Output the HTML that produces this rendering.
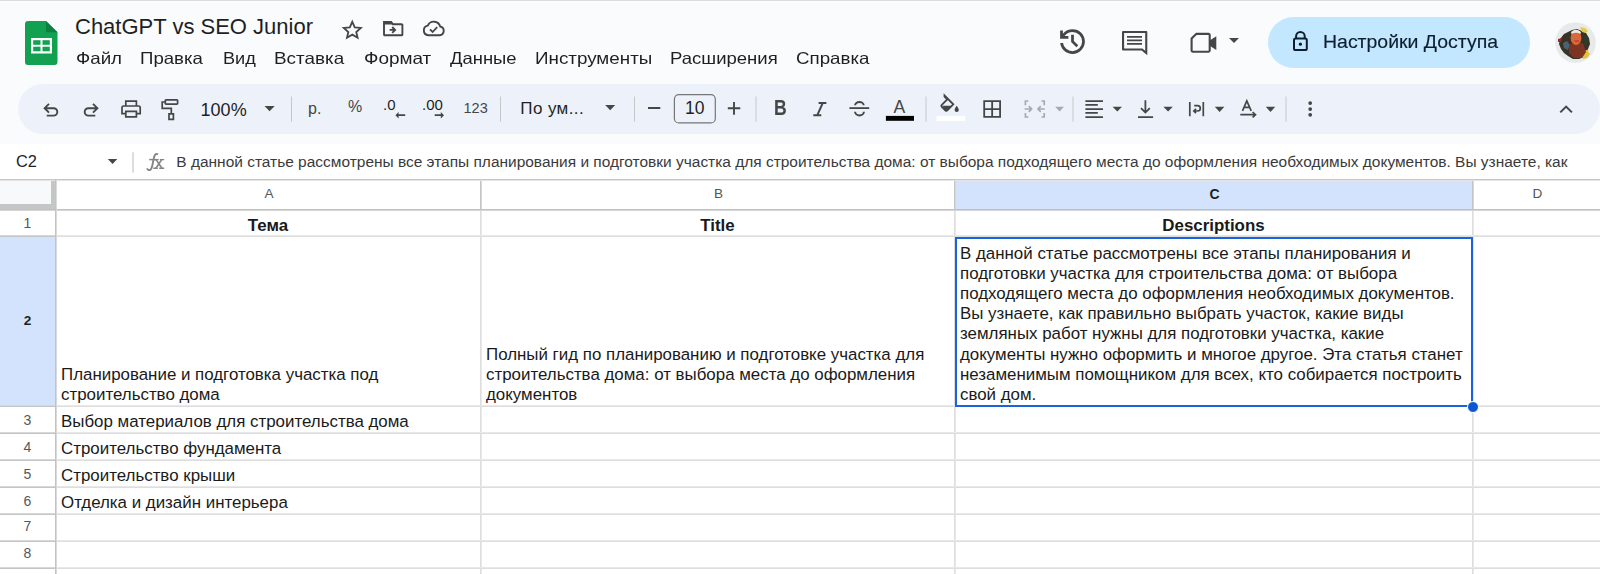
<!DOCTYPE html>
<html><head><meta charset="utf-8">
<style>
*{box-sizing:border-box;margin:0;padding:0}
html,body{width:1600px;height:574px;overflow:hidden;background:#fff;font-family:"Liberation Sans",sans-serif;color:#1f1f1f}
.a{position:absolute}
.hdr{left:0;top:0;width:1600px;height:144.4px;background:#f9fbfd}
.tb{left:18px;top:83.7px;width:1582px;height:50.4px;border-radius:25.2px;background:#edf2fa}
.menu{top:48px;transform-origin:0 0;font-size:16.5px;line-height:20px;white-space:nowrap;color:#1f1f1f}
.ico{position:absolute}
.sep{position:absolute;width:1px;height:24px;top:97px;background:#c7c7c7}
.cell{position:absolute;font-size:16.9px;line-height:20.17px;color:#1a1a1a;white-space:nowrap}
.hl{position:absolute;height:1px;background:#e1e1e1;left:0;width:1600px}
.vl{position:absolute;width:1px;background:#e1e1e1;top:179px;height:395px}
.rn{position:absolute;left:0;width:55px;text-align:center;font-size:13px;color:#444746}
.cn{position:absolute;top:179px;height:30px;line-height:30px;text-align:center;font-size:13px;color:#444746}
</style></head><body>
<div class="a hdr"></div>
<div class="a" style="left:0;top:0;width:1600px;height:1px;background:#dadbdd"></div><div class="a" style="left:0;top:1px;width:1600px;height:1px;background:#fdfeff"></div>
<!-- logo -->
<svg class="ico" style="left:25px;top:21px" width="33" height="44" viewBox="0 0 33 44">
<path d="M3 0H21L32.5 11.3V41a3 3 0 0 1-3 3H3a3 3 0 0 1-3-3V3a3 3 0 0 1 3-3z" fill="#12a150"/>
<path d="M21 0L32.5 11.3H21z" fill="#0b8043"/>
<rect x="6" y="17" width="21" height="15.5" fill="#fff"/>
<rect x="8.2" y="19.2" width="7.3" height="4.6" fill="#12a150"/>
<rect x="17.5" y="19.2" width="7.3" height="4.6" fill="#12a150"/>
<rect x="8.2" y="25.7" width="7.3" height="4.6" fill="#12a150"/>
<rect x="17.5" y="25.7" width="7.3" height="4.6" fill="#12a150"/>
</svg>
<div class="a" style="left:75px;top:12.8px;font-size:22px;line-height:28px;white-space:nowrap;color:#1f1f1f">ChatGPT vs SEO Junior</div>
<!-- star / folder / cloud -->
<svg class="ico" style="left:0;top:0" width="370" height="45" viewBox="0 0 370 45"><path d="M352.3 21.8L354.8 27.4L360.8 27.95L356.25 31.95L357.6 37.7L352.3 34.65L347 37.7L348.35 31.95L343.8 27.95L349.8 27.4Z" fill="none" stroke="#444746" stroke-width="1.8" stroke-linejoin="miter" stroke-miterlimit="3"/></svg>
<svg class="ico" style="left:0;top:0" width="460" height="45" viewBox="0 0 460 45"><path d="M384 22H391L393 24.2H401.5A0.9 0.9 0 0 1 402.4 25.1V34.4A0.9 0.9 0 0 1 401.5 35.3H384.9A0.9 0.9 0 0 1 384 34.4Z" fill="none" stroke="#444746" stroke-width="1.9"/><path d="M384 21.2H391.3L393.6 24.4H384Z" fill="#444746"/><path d="M389.6 29.9H394.6M392.2 27L395.1 29.9L392.2 32.8" fill="none" stroke="#444746" stroke-width="1.9"/><path d="M428.3 35.2H439.6A4.4 4.4 0 0 0 440.2 26.5A6.6 6.6 0 0 0 427.8 25.6A4.85 4.85 0 0 0 428.3 35.2Z" fill="none" stroke="#444746" stroke-width="1.9" stroke-linejoin="round"/><path d="M430 29.4L432.6 32L437.2 27.2" fill="none" stroke="#444746" stroke-width="1.8"/></svg>


<div class="a menu" style="left:76.2px;transform:scaleX(1.134)">Файл</div>
<div class="a menu" style="left:140.4px;transform:scaleX(1.128)">Правка</div>
<div class="a menu" style="left:222.5px;transform:scaleX(1.100)">Вид</div>
<div class="a menu" style="left:274.4px;transform:scaleX(1.144)">Вставка</div>
<div class="a menu" style="left:363.6px;transform:scaleX(1.148)">Формат</div>
<div class="a menu" style="left:450.0px;transform:scaleX(1.116)">Данные</div>
<div class="a menu" style="left:534.9px;transform:scaleX(1.140)">Инструменты</div>
<div class="a menu" style="left:670.1px;transform:scaleX(1.122)">Расширения</div>
<div class="a menu" style="left:795.7px;transform:scaleX(1.135)">Справка</div>

<!-- right header icons -->
<svg class="ico" style="left:1056px;top:25.4px" width="33" height="33" viewBox="0 -960 960 960"><path d="M480-120q-138 0-240.5-91.5T122-440h82q14 104 92.5 172T480-200q117 0 198.5-81.5T760-480q0-117-81.5-198.5T480-760q-69 0-129 32t-101 88h110v80H120v-240h80v94q51-64 124.5-99T480-840q75 0 140.5 28.5t114 77q48.5 48.5 77 114T840-480q0 75-28.5 140.5t-77 114q-48.5 48.5-114 77T480-120Zm112-192L440-464v-216h80v184l128 128-56 56Z" fill="#444746"/></svg>
<svg class="ico" style="left:0;top:0" width="1250" height="60" viewBox="0 0 1250 60"><path d="M1122 32A1 1 0 0 1 1123 31H1146.3A1 1 0 0 1 1147.3 32V55.2L1141.6 50.6H1123A1 1 0 0 1 1122 49.6ZM1124.1 33.1V48.5H1142.4L1145.2 50.7V33.1Z" fill="#444746" fill-rule="evenodd"/><path d="M1127 36.9H1142M1127 40.3H1142M1127 43.8H1142" stroke="#444746" stroke-width="1.8"/><path d="M1196.2 33.9H1208.6A1.1 1.1 0 0 1 1209.7 35V50.6A1.1 1.1 0 0 1 1208.6 51.7H1192.7A1.1 1.1 0 0 1 1191.6 50.6V38.4Z" fill="none" stroke="#444746" stroke-width="2.1" stroke-linejoin="round"/><path d="M1209.7 40.6L1216.3 36.3V50L1209.7 45.7Z" fill="#444746"/></svg>

<svg class="ico" style="left:1229px;top:37px" width="10" height="7" viewBox="0 0 10 7"><path d="M0 1h10L5 6z" fill="#444746"/></svg>
<div class="a" style="left:1268px;top:17px;width:262px;height:51px;border-radius:25.5px;background:#c2e7ff"></div>
<svg class="ico" style="left:0;top:0" width="1320" height="60" viewBox="0 0 1320 60"><rect x="1294" y="38.6" width="12.8" height="11.4" rx="1.6" fill="none" stroke="#0e1e2e" stroke-width="2"/><path d="M1296.1 38.4V36.2A4.3 4.3 0 0 1 1304.7 36.2V38.4" fill="none" stroke="#0e1e2e" stroke-width="2"/><circle cx="1300.4" cy="44.2" r="1.6" fill="#0e1e2e"/></svg>
<div class="a" style="left:1322.5px;top:31px;font-size:18.2px;line-height:22px;white-space:nowrap;color:#0e1e2e;transform-origin:0 0;transform:scaleX(1.07);-webkit-text-stroke:0.15px #0e1e2e">Настройки Доступа</div>
<svg class="ico" style="left:1555px;top:21.5px" width="41" height="41" viewBox="0 0 41 41"><defs><filter id="bl" x="-10%" y="-10%" width="120%" height="120%"><feGaussianBlur stdDeviation="0.55"/></filter><clipPath id="cc"><circle cx="20.5" cy="20.5" r="20.3"/></clipPath></defs><circle cx="20.5" cy="20.5" r="20.3" fill="#e6eae8"/>
<g filter="url(#bl)" clip-path="url(#cc)">
<path d="M5 17L9 12L13 10L17 8L22 7L27 9L31 11L34 16L35 22L33 27L31 31L29 35L24 37L18 37L13 34L9 31L6 27L4 22Z" fill="#3b3128"/>
<path d="M25 5L30 6L33 9L31 11L27 10Z" fill="#e8cc4a"/>
<path d="M27 29L32 28L35 32L32 36L28 37L26 33Z" fill="#e3c23a"/>
<path d="M8 21L12 19L15 23L13 28L9 26Z" fill="#4a6275"/>
<path d="M3 17L7 16L6 20L3 20Z" fill="#9b2a22"/>
<path d="M14 22L28 21L31 30L27 36L19 36L14 31Z" fill="#7b3420"/>
<ellipse cx="21" cy="16" rx="5.4" ry="7" fill="#d9673b"/>
<path d="M16 10Q21 5.5 26 10L25.5 12Q21 9.5 16.5 12Z" fill="#ece8e2"/>
<path d="M19.5 18.5Q22 20 24 18.5" stroke="#c23a2a" stroke-width="1.4" fill="none"/>
<path d="M28 12L33 15L33 22L29 24Z" fill="#2f3a2c"/>
</g></svg>

<!-- toolbar -->
<div class="a tb"></div>
<svg class="a" style="left:0;top:0" width="1600" height="574" viewBox="0 0 1600 574">
<g fill="none" stroke="#444746" stroke-width="1.9" stroke-linecap="butt" stroke-linejoin="miter">
<!-- undo -->
<path d="M49 103.8L44.6 108.2L49 112.6M45 108.2H53.6A3.7 3.7 0 0 1 53.6 115.6H46.7"/>
<!-- redo -->
<path d="M93 103.8L97.4 108.2L93 112.6M97 108.2H88.4A3.7 3.7 0 0 0 88.4 115.6H95.3"/>
<!-- print -->
<path d="M125.8 105.4V101.2H136.4V105.4M125.8 113.6H122V107.4A1.5 1.5 0 0 1 123.5 106H138.7A1.5 1.5 0 0 1 140.2 107.4V113.6H136.4M125.8 111.4H136.4V116.8H125.8Z" stroke-width="1.7"/>
<!-- paint format -->
<path d="M166 99.9H176.9A0.7 0.7 0 0 1 177.6 100.6V103.5A0.7 0.7 0 0 1 176.9 104.2H166A0.7 0.7 0 0 1 165.3 103.5V100.6A0.7 0.7 0 0 1 166 99.9ZM165.3 102H162.2V108.3H171.3V113.9M169 113.9H173.4V119.3H169Z" stroke-width="1.7"/>
<!-- separators -->
<path d="M291.5 96.5V121.5M500.5 96.5V121.5M634.5 96.5V121.5M756 96.5V121.5M926 96.5V121.5M1073 96.5V121.5M1286 96.5V121.5" stroke="#c7c7c7" stroke-width="1"/>
<!-- minus plus -->
<path d="M648 108H660.3M727.8 108.3H740.3M734 102V114.7" stroke-width="1.9"/>
<!-- italic I -->
<path d="M818.6 102.9H826.4M813.3 115.3H821.3M822.8 102.9L817.2 115.3" stroke-width="2"/>
<!-- strikethrough -->
<path d="M849.4 108.1H869.2" stroke-width="1.8"/>
<path d="M855.1 105.2A4.3 3.2 0 0 1 863.7 105.2" stroke-width="2"/>
<path d="M855.1 111.8A4.4 3.6 0 0 0 863.9 111.8" stroke-width="2"/>
<!-- borders -->
<path d="M984.2 101.2H1000.1V116.9H984.2ZM992.15 101.2V116.9M984.2 109.05H1000.1" stroke-width="1.8"/>
<!-- merge (disabled) -->
<g stroke="#a8abad" stroke-width="1.7">
<path d="M1028.4 101H1025.4V105.2M1025.4 113V117H1028.4M1041.5 101H1044.2V105.2M1044.2 113V117H1041.5"/>
<path d="M1024.6 109H1031.5M1028.8 106.2L1031.6 109L1028.8 111.8M1044.8 109H1038.1M1040.8 106.2L1038 109L1040.8 111.8"/>
</g>
<!-- align -->
<path d="M1085.4 101.1H1103M1085.4 104.9H1097.8M1085.4 109.1H1103M1085.4 112.8H1097.8M1085.4 117.1H1103" stroke-width="1.7"/>
<!-- valign bottom -->
<path d="M1145.4 100.2V112.5M1141 108.2L1145.4 112.6L1149.8 108.2M1138 117.1H1153.1" stroke-width="1.8"/>
<!-- wrap -->
<path d="M1189.8 101.9V116.3M1203.3 101.9V116.3M1194.2 105.6H1197.6A2.7 2.7 0 0 1 1197.6 111H1194M1196 108.8L1193.8 111L1196 113.2" stroke-width="1.7"/>
<!-- rotate A -->
<path d="M1242.5 110.8L1246.8 100.8L1251.2 110.8M1244 107.3H1249.6M1240.3 114.7H1255M1252.6 112L1255.5 114.7L1252.6 117.4" stroke-width="1.7"/>
<!-- chevron up -->
<path d="M1560.3 112.4L1566.1 106.6L1571.9 112.4" stroke-width="2"/>
</g>
<g fill="#444746">
<!-- dropdown arrows -->
<path d="M264.5 106H274.7L269.6 111.2Z"/>
<path d="M605.2 105H615.2L610.2 110.3Z"/>
<path d="M1112.6 106.8H1122L1117.3 111.6Z"/>
<path d="M1163.4 106.8H1172.8L1168.1 111.6Z"/>
<path d="M1214.8 106.7H1224.4L1219.6 111.9Z"/>
<path d="M1265.8 106.7H1275.2L1270.5 111.9Z"/>
<path d="M1055.2 106.8H1064L1059.6 111.6Z" fill="#a8abad"/>
<!-- more vert -->
<circle cx="1310.2" cy="103.1" r="1.9"/><circle cx="1310.2" cy="109.1" r="1.9"/><circle cx="1310.2" cy="114.8" r="1.9"/>
<!-- arrows under .0 / .00 -->
<path d="M395.4 115.2L398.6 112V114.3H405.2V116.1H398.6V118.4Z"/>
<path d="M444 115.2L440.8 112V114.3H434.7V116.1H440.8V118.4Z"/>
<!-- fill bucket -->
<path d="M944.5 95.5L953.3 104.3L947.3 110.3A1.4 1.4 0 0 1 945.3 110.3L941.8 106.8A1.4 1.4 0 0 1 941.8 104.8L947.2 99.4L944.5 96.7Z" fill="none" stroke="#444746" stroke-width="1.8"/>
<path d="M942.3 105.8H952.6L947 111.2A1.2 1.2 0 0 1 945.5 111.2Z"/>
<path d="M956.7 105.8C957.6 107.4 958.8 108.5 958.8 109.9A2.1 2.1 0 0 1 954.6 109.9C954.6 108.5 955.8 107.4 956.7 105.8Z"/>
</g>
<rect x="936.6" y="116" width="28.6" height="4.8" fill="#ffffff"/>
<rect x="885.9" y="115.9" width="28.1" height="4.9" fill="#000000"/>
<!-- font size box -->
<rect x="674.4" y="94.6" width="40.9" height="28.3" rx="4.5" fill="none" stroke="#747775" stroke-width="1.2"/>
</svg>
<div class="a" style="left:200.6px;top:99.8px;font-size:18px;line-height:20px;color:#1f1f1f">100%</div>
<div class="a" style="left:308px;top:99px;font-size:16px;line-height:20px;color:#444746">р.</div>
<div class="a" style="left:348px;top:97px;font-size:16px;line-height:20px;color:#444746">%</div>
<div class="a" style="left:383px;top:95px;font-size:15px;line-height:20px;color:#1f1f1f">.0</div>
<div class="a" style="left:422px;top:95px;font-size:15px;line-height:20px;color:#1f1f1f">.00</div>
<div class="a" style="left:463.5px;top:98px;font-size:14.5px;line-height:20px;color:#444746">123</div>
<div class="a" style="left:520.3px;top:98.5px;font-size:17px;line-height:20px;color:#1f1f1f;letter-spacing:0.4px">По ум...</div>
<div class="a" style="left:685px;top:98px;font-size:17.5px;line-height:20px;color:#1f1f1f">10</div>
<div class="a" style="left:774px;top:96.5px;font-size:22px;line-height:22px;color:#444746;font-weight:bold;transform-origin:0 0;transform:scaleX(0.8)">B</div>
<div class="a" style="left:893.6px;top:96.6px;font-size:17.6px;line-height:20px;color:#444746">A</div>

<!-- formula bar -->
<div class="a" style="left:16px;top:151px;font-size:16.4px;line-height:20px;color:#1f1f1f">C2</div>
<svg class="a" style="left:0;top:140px" width="180" height="40"><path d="M107.8 19H117.3L112.55 24Z" fill="#444746"/><path d="M133 12.3V32.7" stroke="#c7c7c7" stroke-width="1.2"/></svg>
<svg class="a" style="left:0;top:140px" width="180" height="40" viewBox="0 140 180 40"><g fill="none" stroke="#858786" stroke-width="1.5"><path d="M146.9 168.4Q148.3 171 150.6 169.6Q152.2 167.8 153 162L154.2 156.6Q155.4 152.8 158.1 154.3" stroke-width="1.9"/><path d="M149.2 159.6H156"/><path d="M154 159.6H158.6M159.8 159.6H164.2M153.2 168.3H157.8M159.2 168.3H164.2" stroke-width="1.4"/><path d="M156.1 159.6L161.9 168.3M161.7 159.6L155.9 168.3" stroke-width="1.7"/></g></svg>
<div class="a" style="left:176.3px;top:152px;font-size:15.48px;line-height:20px;color:#3a3a3a;white-space:nowrap">В данной статье рассмотрены все этапы планирования и подготовки участка для строительства дома: от выбора подходящего места до оформления необходимых документов. Вы узнаете, как</div>


<!-- grid -->
<div class="a" style="left:955px;top:180px;width:517px;height:29px;background:#d3e3fd"></div>
<div class="a" style="left:0;top:237px;width:55px;height:169px;background:#d3e3fd"></div>
<div class="a" style="left:0;top:180px;width:51px;height:24px;background:#f8f9fa"></div>
<div class="a" style="left:51px;top:180px;width:5px;height:29px;background:#c4c7c5"></div>
<div class="a" style="left:0;top:204px;width:56px;height:5px;background:#c4c7c5"></div>
<!-- header lines -->
<div class="a" style="left:0px;top:179px;width:1600px;height:1px;background:#c6c6c6"></div>
<div class="a" style="left:0px;top:180px;width:1600px;height:1px;background:#e4e4e4"></div>
<div class="a" style="left:480px;top:181px;width:1px;height:28px;background:#c4c6c5"></div>
<div class="a" style="left:481px;top:181px;width:1px;height:28px;background:#d6d6d6"></div>
<div class="a" style="left:954px;top:181px;width:1px;height:28px;background:#c4c6c5"></div>
<div class="a" style="left:955px;top:181px;width:1px;height:28px;background:#d6d6d6"></div>
<div class="a" style="left:1472px;top:181px;width:1px;height:28px;background:#c4c6c5"></div>
<div class="a" style="left:1473px;top:181px;width:1px;height:28px;background:#d6d6d6"></div>
<div class="a" style="left:480px;top:211px;width:1px;height:363px;background:#dedede"></div>
<div class="a" style="left:481px;top:211px;width:1px;height:363px;background:#e8e8e8"></div>
<div class="a" style="left:954px;top:211px;width:1px;height:363px;background:#dedede"></div>
<div class="a" style="left:955px;top:211px;width:1px;height:363px;background:#e8e8e8"></div>
<div class="a" style="left:1472px;top:211px;width:1px;height:363px;background:#dedede"></div>
<div class="a" style="left:1473px;top:211px;width:1px;height:363px;background:#e8e8e8"></div>
<div class="a" style="left:0px;top:235px;width:55px;height:1px;background:#d8d8d8"></div>
<div class="a" style="left:0px;top:236px;width:55px;height:1px;background:#c4c6c5"></div>
<div class="a" style="left:57px;top:235px;width:1543px;height:1px;background:#e8e8e8"></div>
<div class="a" style="left:57px;top:236px;width:1543px;height:1px;background:#dedede"></div>
<div class="a" style="left:0px;top:405px;width:55px;height:1px;background:#d8d8d8"></div>
<div class="a" style="left:0px;top:406px;width:55px;height:1px;background:#c4c6c5"></div>
<div class="a" style="left:57px;top:405px;width:1543px;height:1px;background:#e8e8e8"></div>
<div class="a" style="left:57px;top:406px;width:1543px;height:1px;background:#dedede"></div>
<div class="a" style="left:0px;top:432px;width:55px;height:1px;background:#d8d8d8"></div>
<div class="a" style="left:0px;top:433px;width:55px;height:1px;background:#c4c6c5"></div>
<div class="a" style="left:57px;top:432px;width:1543px;height:1px;background:#e8e8e8"></div>
<div class="a" style="left:57px;top:433px;width:1543px;height:1px;background:#dedede"></div>
<div class="a" style="left:0px;top:459px;width:55px;height:1px;background:#d8d8d8"></div>
<div class="a" style="left:0px;top:460px;width:55px;height:1px;background:#c4c6c5"></div>
<div class="a" style="left:57px;top:459px;width:1543px;height:1px;background:#e8e8e8"></div>
<div class="a" style="left:57px;top:460px;width:1543px;height:1px;background:#dedede"></div>
<div class="a" style="left:0px;top:486px;width:55px;height:1px;background:#d8d8d8"></div>
<div class="a" style="left:0px;top:487px;width:55px;height:1px;background:#c4c6c5"></div>
<div class="a" style="left:57px;top:486px;width:1543px;height:1px;background:#e8e8e8"></div>
<div class="a" style="left:57px;top:487px;width:1543px;height:1px;background:#dedede"></div>
<div class="a" style="left:0px;top:513px;width:55px;height:1px;background:#d8d8d8"></div>
<div class="a" style="left:0px;top:514px;width:55px;height:1px;background:#c4c6c5"></div>
<div class="a" style="left:57px;top:513px;width:1543px;height:1px;background:#e8e8e8"></div>
<div class="a" style="left:57px;top:514px;width:1543px;height:1px;background:#dedede"></div>
<div class="a" style="left:0px;top:540px;width:55px;height:1px;background:#d8d8d8"></div>
<div class="a" style="left:0px;top:541px;width:55px;height:1px;background:#c4c6c5"></div>
<div class="a" style="left:57px;top:540px;width:1543px;height:1px;background:#e8e8e8"></div>
<div class="a" style="left:57px;top:541px;width:1543px;height:1px;background:#dedede"></div>
<div class="a" style="left:0px;top:567px;width:55px;height:1px;background:#d8d8d8"></div>
<div class="a" style="left:0px;top:568px;width:55px;height:1px;background:#c4c6c5"></div>
<div class="a" style="left:57px;top:567px;width:1543px;height:1px;background:#e8e8e8"></div>
<div class="a" style="left:57px;top:568px;width:1543px;height:1px;background:#dedede"></div>
<div class="a" style="left:0px;top:209px;width:1600px;height:1px;background:#bfc1c0"></div>
<div class="a" style="left:0px;top:210px;width:1600px;height:1px;background:#d6d6d6"></div>
<div class="a" style="left:55px;top:179px;width:1px;height:395px;background:#c2c4c3"></div>
<div class="a" style="left:56px;top:181px;width:1px;height:393px;background:#d9d9d9"></div>
<div class="a" style="left:56px;top:185px;width:424px;text-align:center;padding-left:2px;font-size:13.6px;line-height:18px;color:#555759;font-weight:normal">A</div>
<div class="a" style="left:481px;top:185px;width:473px;text-align:center;padding-left:2px;font-size:13.6px;line-height:18px;color:#555759;font-weight:normal">B</div>
<div class="a" style="left:955px;top:185px;width:517px;text-align:center;padding-left:2px;font-size:14px;line-height:18px;color:#1f1f1f;font-weight:bold">C</div>
<div class="a" style="left:1473px;top:185px;width:127px;text-align:center;padding-left:2px;font-size:13.6px;line-height:18px;color:#555759;font-weight:normal">D</div>
<div class="a" style="left:0;top:213.5px;width:55px;text-align:center;font-size:14px;line-height:18px;color:#555759;font-weight:normal">1</div>
<div class="a" style="left:0;top:311.5px;width:55px;text-align:center;font-size:13.6px;line-height:18px;color:#1f1f1f;font-weight:bold">2</div>
<div class="a" style="left:0;top:410.5px;width:55px;text-align:center;font-size:14px;line-height:18px;color:#555759;font-weight:normal">3</div>
<div class="a" style="left:0;top:437.5px;width:55px;text-align:center;font-size:14px;line-height:18px;color:#555759;font-weight:normal">4</div>
<div class="a" style="left:0;top:464.5px;width:55px;text-align:center;font-size:14px;line-height:18px;color:#555759;font-weight:normal">5</div>
<div class="a" style="left:0;top:491.5px;width:55px;text-align:center;font-size:14px;line-height:18px;color:#555759;font-weight:normal">6</div>
<div class="a" style="left:0;top:516.5px;width:55px;text-align:center;font-size:14px;line-height:18px;color:#555759;font-weight:normal">7</div>
<div class="a" style="left:0;top:543.5px;width:55px;text-align:center;font-size:14px;line-height:18px;color:#555759;font-weight:normal">8</div>

<div class="a cell" style="left:56px;top:215.5px;width:424px;text-align:center;font-weight:bold">Тема</div>
<div class="a cell" style="left:481px;top:215.5px;width:473px;text-align:center;font-weight:bold">Title</div>
<div class="a cell" style="left:955px;top:215.5px;width:517px;text-align:center;font-weight:bold">Descriptions</div>
<div class="a cell" style="left:61px;top:364.5px">Планирование и подготовка участка под<br>строительство дома</div>
<div class="a cell" style="left:486px;top:344.5px">Полный гид по планированию и подготовке участка для<br>строительства дома: от выбора места до оформления<br>документов</div>
<div class="a cell" style="left:960px;top:243.8px">В данной статье рассмотрены все этапы планирования и<br>подготовки участка для строительства дома: от выбора<br>подходящего места до оформления необходимых документов.<br>Вы узнаете, как правильно выбрать участок, какие виды<br>земляных работ нужны для подготовки участка, какие<br>документы нужно оформить и многое другое. Эта статья станет<br>незаменимым помощником для всех, кто собирается построить<br>свой дом.</div>
<div class="a cell" style="left:61px;top:412px">Выбор материалов для строительства дома</div>
<div class="a cell" style="left:61px;top:439px">Строительство фундамента</div>
<div class="a cell" style="left:61px;top:466px">Строительство крыши</div>
<div class="a cell" style="left:61px;top:493px">Отделка и дизайн интерьера</div>
<!-- selection -->
<div class="a" style="left:955px;top:237px;width:518px;height:170px;border:2px solid #1a62e0"></div>
<div class="a" style="left:1468px;top:401.5px;width:10px;height:10px;border-radius:50%;background:#0b57d0;border:1px solid #fff;box-sizing:content-box;margin:-1px"></div>
</body></html>
